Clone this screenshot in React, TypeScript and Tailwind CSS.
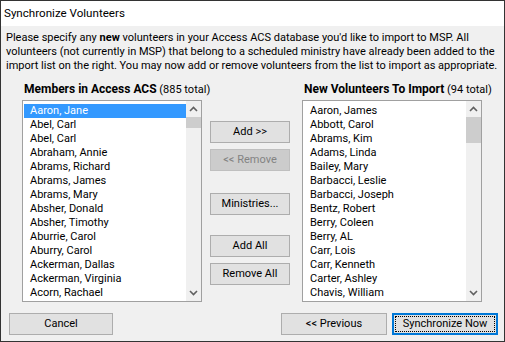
import React from "react";

const leftItems = [
  "Aaron, Jane",
  "Abel, Carl",
  "Abel, Carl",
  "Abraham, Annie",
  "Abrams, Richard",
  "Abrams, James",
  "Abrams, Mary",
  "Absher, Donald",
  "Absher, Timothy",
  "Aburrie, Carol",
  "Aburry, Carol",
  "Ackerman, Dallas",
  "Ackerman, Virginia",
  "Acorn, Rachael",
];

const rightItems = [
  "Aaron, James",
  "Abbott, Carol",
  "Abrams, Kim",
  "Adams, Linda",
  "Bailey, Mary",
  "Barbacci, Leslie",
  "Barbacci, Joseph",
  "Bentz, Robert",
  "Berry, Coleen",
  "Berry, AL",
  "Carr, Lois",
  "Carr, Kenneth",
  "Carter, Ashley",
  "Chavis, William",
];

function Chevron({ up }: { up?: boolean }) {
  return (
    <svg width="9" height="6" viewBox="0 0 9 6" className="block">
      <path
        d={up ? "M1 5 L4.5 1.5 L8 5" : "M1 1 L4.5 4.5 L8 1"}
        fill="none"
        stroke="#606060"
        strokeWidth="1.6"
      />
    </svg>
  );
}

function ListBox({
  items,
  selected,
  thumbClass,
}: {
  items: string[];
  selected?: number;
  thumbClass: string;
}) {
  return (
    <div className="flex h-[202px] w-[180px] border border-[#a0a0a0] bg-white">
      <div className="flex-1 overflow-hidden pl-px pt-[3px]">
        {items.map((it, i) => (
          <div
            key={i}
            className={
              i === selected
                ? "h-[14px] whitespace-nowrap bg-[#3399ff] pl-[6px] leading-[14px] text-white"
                : "h-[14px] whitespace-nowrap pl-[6px] leading-[14px] text-black"
            }
          >
            {it}
          </div>
        ))}
      </div>
      <div className="flex w-[15px] flex-col bg-[#f0f0f0]">
        <div className="flex h-[16px] items-center justify-center">
          <Chevron up />
        </div>
        <div className={thumbClass} />
        <div className="flex-1" />
        <div className="flex h-[16px] items-center justify-center">
          <Chevron />
        </div>
      </div>
    </div>
  );
}

function Btn({
  children,
  disabled,
  className = "",
}: {
  children: React.ReactNode;
  disabled?: boolean;
  className?: string;
}) {
  return (
    <div
      className={
        (disabled
          ? "border-[#bfbfbf] bg-[#cccccc] text-[#838383] "
          : "border-[#adadad] bg-[#e1e1e1] text-black ") +
        "flex h-[22px] items-center justify-center border text-[11px] leading-[14px] whitespace-nowrap " +
        className
      }
    >
      {children}
    </div>
  );
}

export default function App() {
  return (
    <div className="flex h-[342px] w-[505px] flex-col border border-[#333333] bg-[#f0f0f0] font-['Roboto',sans-serif] text-[11px] text-black">
      <div className="flex h-[25px] items-center bg-white pl-[3px] text-[11.6px]">
        Synchronize Volunteers
      </div>
      <div className="flex flex-1 flex-col">
        <div className="pl-[5px] pt-[5px] leading-[14px] whitespace-nowrap">
          <div>
            Please specify any <span className="font-bold">new</span> volunteers in your Access ACS database you'd like to import to MSP. All
          </div>
          <div>volunteers (not currently in MSP) that belong to a scheduled ministry have already been added to the</div>
          <div>import list on the right. You may now add or remove volunteers from the list to import as appropriate.</div>
        </div>

        <div className="mt-[9px] flex pl-[22px] leading-[14px] whitespace-nowrap">
          <div className="w-[280px] pl-px">
            <span className="text-[12px] font-bold">Members in Access ACS</span> (885 total)
          </div>
          <div className="pl-px">
            <span className="text-[12px] font-bold">New Volunteers To Import</span> (94 total)
          </div>
        </div>

        <div className="mt-[3px] flex pl-[21px]">
          <ListBox items={leftItems} selected={0} thumbClass="h-[11px] bg-[#cdcdcd]" />
          <div className="ml-[8px] flex w-[80px] flex-col pt-[21px]">
            <Btn>Add &gt;&gt;</Btn>
            <Btn disabled className="mt-[6px]">
              &lt;&lt; Remove
            </Btn>
            <Btn className="mt-[22px]">Ministries...</Btn>
            <Btn className="mt-[20px]">Add All</Btn>
            <Btn className="mt-[6px]">Remove All</Btn>
          </div>
          <div className="ml-[12px]">
            <ListBox items={rightItems} thumbClass="h-[26px] bg-[#cdcdcd]" />
          </div>
        </div>

        <div className="mt-[11px] flex items-center justify-between pl-[8px] pr-[6px]">
          <Btn className="w-[104px]">Cancel</Btn>
          <div className="flex gap-[5px]">
            <Btn className="w-[106px]">&lt;&lt; Previous</Btn>
            <div className="relative flex h-[22px] w-[106px] items-center justify-center border-2 border-[#0078d7] bg-[#e1e1e1] text-[11px] whitespace-nowrap">
              <span className="absolute inset-px border border-dotted border-black" />
              Synchronize Now
            </div>
          </div>
        </div>
      </div>
    </div>
  );
}
